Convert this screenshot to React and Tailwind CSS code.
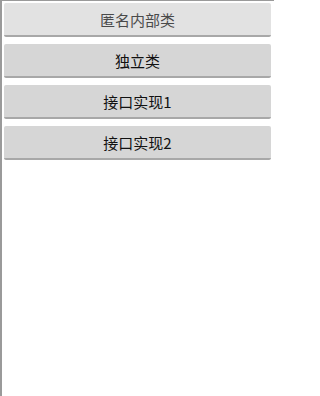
const items = ["匿名内部类", "独立类", "接口实现1", "接口实现2"]

export default function App() {
  return (
    <div
      className="h-[396px] w-[274px] bg-white border-l-2 border-t border-[#9a9a9a] pt-[2px] pl-[2px] pr-[3px] flex flex-col gap-[7px]"
      style={{ fontFamily: '"Noto Sans CJK SC", "Noto Sans", sans-serif' }}
    >
      {items.map((label, i) => (
        <button
          key={label}
          className={`h-[34px] w-full rounded-[2px] border-b-2 border-[#a8a8a8] text-[15px] leading-none ${
            i === 0 ? "bg-[#e2e2e2] text-[#4a4a4a]" : "bg-[#d6d6d6] text-[#111]"
          }`}
        >
          {label}
        </button>
      ))}
    </div>
  )
}
